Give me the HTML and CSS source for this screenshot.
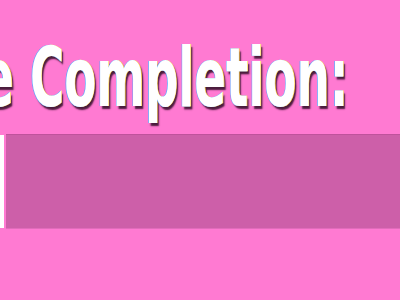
FILE: index.html
```html
<!DOCTYPE html>
<html lang="en">
<head>
  <meta charset="UTF-8" />
  <title>Completion</title>
  <link rel="stylesheet" href="styles.css">
</head>
<body>
  <section class="progress">
    <h1 class="progress-label"><span>e Completion:</span></h1>
    <div class="progress-bar">
      <div class="progress-fill"></div>
      <div class="progress-track"></div>
    </div>
  </section>
</body>
</html>
```

FILE: styles.css
```css
body {
  margin: 0;
  background: #ff7ad2;
  overflow: hidden;
}

.progress {
  padding-top: 37px;
}

.progress-label {
  margin: 0 0 0 -18px;
  font-family: "DejaVu Sans Condensed", "Liberation Sans", sans-serif;
  font-weight: bold;
  font-size: 82px;
  line-height: 82px;
  color: #ffffff;
  white-space: nowrap;
}

.progress-label span {
  display: inline-block;
  transform: scaleX(0.633);
  transform-origin: left center;
  text-shadow:
    -1px 0 #5fa8ff,
    1px 0 #ffd24a,
    3px 3px 2px #4a1c3c;
}

.progress-bar {
  display: flex;
  gap: 2px;
  margin-top: 15px;
  height: 95px;
}

.progress-fill {
  width: 4px;
  margin: 1px 0;
  background: #ffffff;
}

.progress-track {
  flex: 1;
  background: #cd5fa9;
  border-top: 1px solid #bf529c;
  border-bottom: 1px solid #e16cbb;
}
```
